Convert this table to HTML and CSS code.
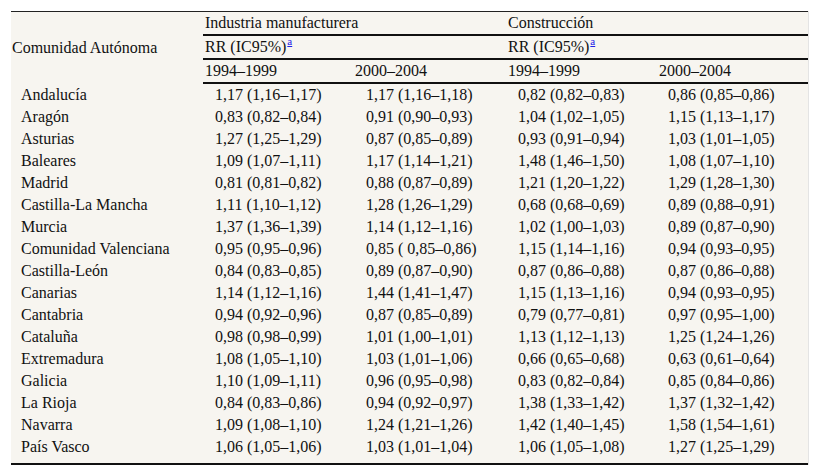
FILE: index.html
```html
<!DOCTYPE html>
<html lang="es">
<head>
<meta charset="utf-8">
<title>Tabla</title>
<link rel="stylesheet" href="styles.css">
</head>
<body>
<div class="wrap">
<table class="tbl">
<colgroup>
<col class="c1"><col class="c2"><col class="c3"><col class="c4"><col class="c5">
</colgroup>
<thead>
<tr class="h1">
<th rowspan="3" class="region-head">Comunidad Autónoma</th>
<th colspan="2" class="ul">Industria manufacturera</th>
<th colspan="2" class="ul">Construcción</th>
</tr>
<tr class="h2">
<th colspan="2" class="ul">RR (IC95%)<sup><a href="#fn-a">a</a></sup></th>
<th colspan="2" class="ul">RR (IC95%)<sup><a href="#fn-a">a</a></sup></th>
</tr>
<tr class="h3">
<th class="ul">1994–1999</th>
<th class="ul">2000–2004</th>
<th class="ul">1994–1999</th>
<th class="ul">2000–2004</th>
</tr>
</thead>
<tbody>
<tr><td>Andalucía</td><td>1,17 (1,16–1,17)</td><td>1,17 (1,16–1,18)</td><td>0,82 (0,82–0,83)</td><td>0,86 (0,85–0,86)</td></tr>
<tr><td>Aragón</td><td>0,83 (0,82–0,84)</td><td>0,91 (0,90–0,93)</td><td>1,04 (1,02–1,05)</td><td>1,15 (1,13–1,17)</td></tr>
<tr><td>Asturias</td><td>1,27 (1,25–1,29)</td><td>0,87 (0,85–0,89)</td><td>0,93 (0,91–0,94)</td><td>1,03 (1,01–1,05)</td></tr>
<tr><td>Baleares</td><td>1,09 (1,07–1,11)</td><td>1,17 (1,14–1,21)</td><td>1,48 (1,46–1,50)</td><td>1,08 (1,07–1,10)</td></tr>
<tr><td>Madrid</td><td>0,81 (0,81–0,82)</td><td>0,88 (0,87–0,89)</td><td>1,21 (1,20–1,22)</td><td>1,29 (1,28–1,30)</td></tr>
<tr><td>Castilla-La Mancha</td><td>1,11 (1,10–1,12)</td><td>1,28 (1,26–1,29)</td><td>0,68 (0,68–0,69)</td><td>0,89 (0,88–0,91)</td></tr>
<tr><td>Murcia</td><td>1,37 (1,36–1,39)</td><td>1,14 (1,12–1,16)</td><td>1,02 (1,00–1,03)</td><td>0,89 (0,87–0,90)</td></tr>
<tr><td>Comunidad Valenciana</td><td>0,95 (0,95–0,96)</td><td>0,85 ( 0,85–0,86)</td><td>1,15 (1,14–1,16)</td><td>0,94 (0,93–0,95)</td></tr>
<tr><td>Castilla-León</td><td>0,84 (0,83–0,85)</td><td>0,89 (0,87–0,90)</td><td>0,87 (0,86–0,88)</td><td>0,87 (0,86–0,88)</td></tr>
<tr><td>Canarias</td><td>1,14 (1,12–1,16)</td><td>1,44 (1,41–1,47)</td><td>1,15 (1,13–1,16)</td><td>0,94 (0,93–0,95)</td></tr>
<tr><td>Cantabria</td><td>0,94 (0,92–0,96)</td><td>0,87 (0,85–0,89)</td><td>0,79 (0,77–0,81)</td><td>0,97 (0,95–1,00)</td></tr>
<tr><td>Cataluña</td><td>0,98 (0,98–0,99)</td><td>1,01 (1,00–1,01)</td><td>1,13 (1,12–1,13)</td><td>1,25 (1,24–1,26)</td></tr>
<tr><td>Extremadura</td><td>1,08 (1,05–1,10)</td><td>1,03 (1,01–1,06)</td><td>0,66 (0,65–0,68)</td><td>0,63 (0,61–0,64)</td></tr>
<tr><td>Galicia</td><td>1,10 (1,09–1,11)</td><td>0,96 (0,95–0,98)</td><td>0,83 (0,82–0,84)</td><td>0,85 (0,84–0,86)</td></tr>
<tr><td>La Rioja</td><td>0,84 (0,83–0,86)</td><td>0,94 (0,92–0,97)</td><td>1,38 (1,33–1,42)</td><td>1,37 (1,32–1,42)</td></tr>
<tr><td>Navarra</td><td>1,09 (1,08–1,10)</td><td>1,24 (1,21–1,26)</td><td>1,42 (1,40–1,45)</td><td>1,58 (1,54–1,61)</td></tr>
<tr><td>País Vasco</td><td>1,06 (1,05–1,06)</td><td>1,03 (1,01–1,04)</td><td>1,06 (1,05–1,08)</td><td>1,27 (1,25–1,29)</td></tr>
</tbody>
</table>
</div>
</body>
</html>
```

FILE: styles.css
```css
html, body {
  margin: 0;
  padding: 0;
  background: #ffffff;
}

body {
  padding: 11px 0 0 11px;
  font-family: "Liberation Serif", "Times New Roman", serif;
  font-size: 16px;
  color: #111;
}

.wrap {
  width: 797px;
  background: #f7f5f0;
  border-top: 1px solid #222;
  border-bottom: 2px solid #111;
  box-shadow: 1px 0 0 #e4e4e4;
  padding-bottom: 5px;
}

.tbl {
  width: 797px;
  border-collapse: collapse;
  table-layout: fixed;
}

.c1 { width: 192px; }
.c2 { width: 150px; }
.c3 { width: 153px; }
.c4 { width: 151px; }
.c5 { width: 151px; }

.tbl th {
  font-weight: normal;
  text-align: left;
  padding: 0 0 0 2px;
  height: 22px;
  line-height: 22px;
  white-space: nowrap;
}

.tbl th.region-head {
  padding-left: 1px;
  vertical-align: middle;
}

.tbl th.ul {
  border-bottom: 2px solid #111;
}

.tbl td {
  padding: 0 0 0 12px;
  height: 22px;
  line-height: 22px;
  white-space: nowrap;
}

.tbl td:first-child {
  padding-left: 10px;
}

.tbl td:nth-child(3) { padding-left: 13px; }
.tbl td:nth-child(5) { padding-left: 11px; }

sup {
  font-size: 11px;
  line-height: 0;
  vertical-align: 7px;
  margin-left: 1px;
}

sup a {
  color: #2020e8;
  text-decoration: underline;
}
```
